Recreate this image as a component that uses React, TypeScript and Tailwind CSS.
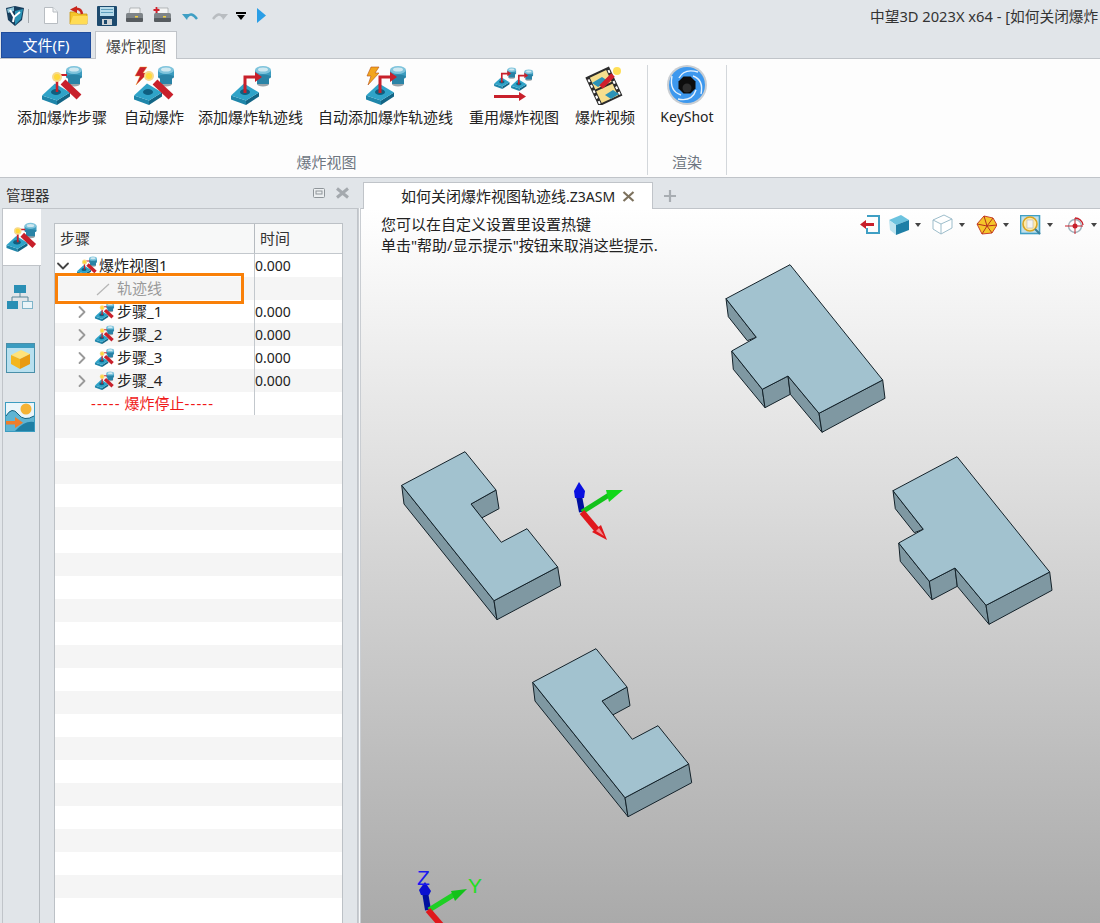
import React from "react";
import { ChevronDown, ChevronRight } from "lucide-react";

const Block = () => (
  <g>
    <polygon points="2,30.5 17,35.5 17,40 2,34.5" fill="#1f86aa" />
    <polygon points="17,35.5 30,27.5 30,31.5 17,40" fill="#136585" />
    <polygon points="2,30.5 15,18.5 30,27.5 17,35.5" fill="#2fa3c8" />
    <ellipse cx="16" cy="27" rx="5" ry="3" fill="#0f5f80" />
  </g>
);
const Cyl = () => (
  <g>
    <ellipse cx="34" cy="19" rx="6" ry="2.5" fill="#9aa3a8" />
    <rect x="28" y="11" width="12" height="8" fill="#2a83a6" />
    <rect x="26" y="5" width="16" height="7" fill="#3c9cbf" />
    <ellipse cx="34" cy="12" rx="8" ry="2.5" fill="#2a83a6" />
    <ellipse cx="34" cy="5" rx="8" ry="4" fill="#7fc4dc" />
    <ellipse cx="34" cy="4.5" rx="5" ry="2" fill="#cfe8f0" />
  </g>
);
const Bar = () => <line x1="23" y1="17" x2="39" y2="32" stroke="#c8202b" strokeWidth="7" />;
const Star = ({ x = 17, y = 12 }: { x?: number; y?: number }) => (
  <g>
    <circle cx={x} cy={y} r="5" fill="#f7d98a" />
    <circle cx={x} cy={y} r="3" fill="#ffd83a" />
  </g>
);
const Bolt = () => (
  <polygon points="8,2 15,2 11,8 16,8 4,20 8,11 3,11" fill="#c8202b" stroke="#f0a020" strokeWidth="0.4" />
);
const Arrow = () => (
  <g>
    <polyline points="16,28 16,12 27,12" fill="none" stroke="#c8202b" strokeWidth="3" />
    <polygon points="26,7 33,12 26,17" fill="#c8202b" />
  </g>
);

const StepIcon = ({ size = 44 }: { size?: number }) => (
  <svg width={size} height={(size * 40) / 44} viewBox="0 0 44 40">
    <Block />
    <Cyl />
    <line x1="17" y1="27" x2="17" y2="12" stroke="#c8202b" strokeWidth="2.5" />
    <line x1="17" y1="10" x2="27" y2="10" stroke="#c8202b" strokeWidth="2" />
    <Bar />
    <Star />
  </svg>
);
const AutoIcon = () => (
  <svg width="44" height="40" viewBox="0 0 44 40">
    <Block />
    <Cyl />
    <Bar />
    <Bolt />
    <Star y={11} />
  </svg>
);
const TrackIcon = ({ bolt }: { bolt?: boolean }) => (
  <svg width="44" height="40" viewBox="0 0 44 40">
    <Block />
    <Cyl />
    <Arrow />
    {bolt && <polygon points="7,2 15,2 11,8 15,8 4,20 7,11 3,11" fill="#f2a51e" stroke="#b5501a" strokeWidth="0.6" />}
  </svg>
);
const ReuseIcon = () => (
  <svg width="44" height="40" viewBox="0 0 44 40">
    <g transform="translate(1,2) scale(0.55)">
      <Block />
      <Cyl />
      <Arrow />
    </g>
    <g transform="translate(18,4) scale(0.55)">
      <Block />
      <Cyl />
      <Arrow />
    </g>
    <rect x="2" y="30" width="26" height="3" fill="#c8202b" />
    <polygon points="27,27 34,31.5 27,36" fill="#c8202b" />
  </svg>
);
const VideoIcon = () => (
  <svg width="44" height="40" viewBox="0 0 44 40">
    <g transform="rotate(-25 20 22)">
      <rect x="8" y="6" width="26" height="32" fill="#2b2b2b" />
      <rect x="12" y="8" width="18" height="13" fill="#f5de8e" />
      <rect x="12" y="23" width="18" height="13" fill="#f5de8e" />
      <g fill="#fff">
        <rect x="9" y="9" width="2" height="3" />
        <rect x="9" y="15" width="2" height="3" />
        <rect x="9" y="21" width="2" height="3" />
        <rect x="9" y="27" width="2" height="3" />
        <rect x="9" y="33" width="2" height="3" />
        <rect x="31" y="9" width="2" height="3" />
        <rect x="31" y="15" width="2" height="3" />
        <rect x="31" y="21" width="2" height="3" />
        <rect x="31" y="27" width="2" height="3" />
        <rect x="31" y="33" width="2" height="3" />
      </g>
    </g>
    <polygon points="9,18 19,12 25,16 15,22" fill="#2b93b8" />
    <polygon points="22,30 30,25 36,29 28,34" fill="#2b93b8" />
    <line x1="18" y1="22" x2="30" y2="10" stroke="#d0202b" strokeWidth="5" />
    <circle cx="34" cy="6" r="4" fill="#ffdf55" />
  </svg>
);
const KeyShotIcon = () => (
  <svg width="42" height="42" viewBox="0 0 42 42">
    <circle cx="21" cy="21" r="20" fill="#c9ced3" />
    <circle cx="21" cy="21" r="18" fill="#3d98ee" />
    <g stroke="#e6f2fd" strokeWidth="1.4" fill="none">
      <path d="M13 14 Q18 4 32 8" />
      <path d="M27 12 Q38 16 35 30" />
      <path d="M30 26 Q26 38 12 35" />
      <path d="M15 31 Q3 27 6 12" />
    </g>
    <polygon points="17.5,12.5 24.5,12.5 29.5,17.5 29.5,24.5 24.5,29.5 17.5,29.5 12.5,24.5 12.5,17.5" fill="#0d0d0d" />
    <circle cx="21" cy="24" r="4.5" fill="#2e2e2e" />
  </svg>
);

const RibbonBtn = ({ label, className = "", children }: { label: string; className?: string; children: React.ReactNode }) => (
  <div className={`flex flex-col items-center ${className}`}>
    <div className="h-[40px] flex items-center justify-center">{children}</div>
    <div className="h-[24px] leading-[24px] text-[15px] text-[#222] whitespace-nowrap">{label}</div>
  </div>
);

const Logo = () => (
  <svg width="20" height="22" viewBox="0 0 20 22">
    <polygon points="1,3 10,1 19,3 17,15 10,21 3,15" fill="#173d5c" />
    <polygon points="10,6 18,4 16,14 10,20" fill="#2a93b5" />
    <polygon points="2,4 9,2 9,6 3,8" fill="#8fc7da" />
    <path d="M5 5 L9 12 M9 12 L15 7 M9 12 L8 17" stroke="#fff" strokeWidth="2" fill="none" />
  </svg>
);
const NewDoc = () => (
  <svg width="14" height="17" viewBox="0 0 14 17">
    <path d="M0.5 0.5 H9 L13.5 5 V16.5 H0.5 Z" fill="#fff" stroke="#b8bdc2" />
    <path d="M9 0.5 V5 H13.5" fill="#eef1f3" stroke="#b8bdc2" />
  </svg>
);
const OpenIcon = () => (
  <svg width="20" height="19" viewBox="0 0 20 19">
    <path d="M1 6 H7 L9 8 H18 V18 H1 Z" fill="#f5c52a" stroke="#c99712" strokeWidth="0.8" />
    <polygon points="1,18 4,10 19,10 18,18" fill="#ffdc55" />
    <path d="M13 8 Q12 2 6 3" stroke="#c9261c" strokeWidth="2.5" fill="none" />
    <polygon points="8,0 1,3.5 8,7" fill="#c9261c" />
  </svg>
);
const SaveIcon = () => (
  <svg width="20" height="20" viewBox="0 0 20 20">
    <rect width="20" height="20" rx="1" fill="#1d4a6e" />
    <rect x="3" y="1" width="14" height="9" fill="#b7dbea" />
    <rect x="4" y="3" width="12" height="1" fill="#5f9fbd" />
    <rect x="4" y="6" width="12" height="1" fill="#5f9fbd" />
    <rect x="5" y="13" width="10" height="6" fill="#ced3d6" />
    <rect x="7" y="14" width="3" height="4" fill="#1d4a6e" />
  </svg>
);
const PrintIcon = ({ plus }: { plus?: boolean }) => (
  <svg width="19" height="17" viewBox="0 0 19 17">
    <polygon points="5,1 15,1 15,7 4,7" fill="#f4f5f5" stroke="#8d9296" strokeWidth="0.6" />
    <rect x="1" y="6" width="17" height="8" rx="1.5" fill="#7e8488" />
    <rect x="1" y="11" width="17" height="4" rx="1" fill="#565b5f" />
    <rect x="10" y="9" width="3" height="1.5" fill="#f0d040" />
    {plus && <path d="M3.5 0 V6 M0.5 3 H6.5" stroke="#d1202b" strokeWidth="1.8" />}
  </svg>
);
const UndoIcon = ({ color, flip }: { color: string; flip?: boolean }) => (
  <svg width="17" height="10" viewBox="0 0 17 10" className={flip ? "-scale-x-100" : ""}>
    <path d="M5 6 Q9 0 15 8" stroke={color} strokeWidth="2.4" fill="none" />
    <polygon points="0,3 7,3 5,9" fill={color} />
  </svg>
);

const Hierarchy = () => (
  <svg width="26" height="24" viewBox="0 0 26 24">
    <rect x="7" y="0" width="12" height="8" fill="#2a8fb5" />
    <path d="M13 8 V12 M5 16 V12 H21 V16" stroke="#5a8597" fill="none" />
    <rect x="0" y="16" width="11" height="8" fill="#2a8fb5" />
    <rect x="15.5" y="16.5" width="10" height="7" fill="#eaf4f8" stroke="#7fb4c9" />
  </svg>
);
const BoxWin = () => (
  <svg width="29" height="30" viewBox="0 0 29 30">
    <rect x="0.5" y="0.5" width="28" height="29" fill="#b8e0ef" stroke="#4a8fa9" />
    <rect x="1" y="1" width="27" height="4" fill="#3b9cc0" />
    <polygon points="5,12 15,7 24,11 14,16" fill="#ffe27a" />
    <polygon points="5,12 14,16 14,26 5,21" fill="#f3b61f" />
    <polygon points="14,16 24,11 24,21 14,26" fill="#e89a12" />
  </svg>
);
const Landscape = () => (
  <svg width="30" height="30" viewBox="0 0 30 30">
    <rect x="0.5" y="0.5" width="29" height="29" fill="#eaf5fa" stroke="#3b9cc0" />
    <circle cx="21" cy="7" r="5.5" fill="#f5b335" />
    <path d="M1 14 Q7 4 13 12 T29 14 V29 H1 Z" fill="#5fb4d2" />
    <path d="M10 29 Q20 18 29 20 V29 Z" fill="#1f7fa4" />
    <path d="M1 14 Q7 4 13 12 T29 14" stroke="#14607e" fill="none" />
    <rect x="1" y="19" width="10" height="3.5" fill="#ee7d2b" />
    <polygon points="10,15 18,20.8 10,26" fill="#ee7d2b" />
  </svg>
);

const Caret = () => (
  <svg width="6" height="4" viewBox="0 0 6 4" className="ml-[6px]">
    <polygon points="0,0 6,0 3,4" fill="#444" />
  </svg>
);
const ViewIcons = () => (
  <div className="absolute top-[5px] right-[3px] flex items-center">
    <svg width="20" height="19" viewBox="0 0 20 19" className="mr-[8px]">
      <path d="M7 1 H19 V18 H7 V13" fill="none" stroke="#3f9fc4" strokeWidth="2" />
      <rect x="5" y="8" width="9" height="3" fill="#c8202b" />
      <polygon points="6,5 0,9.5 6,14" fill="#c8202b" />
    </svg>
    <svg width="21" height="21" viewBox="0 0 21 21">
      <polygon points="1,6 13,1 21,6 8,11" fill="#6cc3df" />
      <polygon points="1,6 8,11 8,21 2,16" fill="#bfe4f0" />
      <polygon points="8,11 21,6 21,16 8,21" fill="#1e7fa6" />
    </svg>
    <Caret />
    <svg width="21" height="21" viewBox="0 0 21 21" className="ml-[11px]">
      <path d="M1 6 L12 1 L20 5 V14 L9 20 L1 15 Z M1 6 L9 10 L20 5 M9 10 V20" fill="#fff" stroke="#9dbdcb" />
    </svg>
    <Caret />
    <svg width="21" height="20" viewBox="0 0 21 20" className="ml-[11px]">
      <polygon points="1,9 8,1 17,3 21,10 16,18 6,19" fill="#f5c52a" stroke="#c8402b" />
      <path d="M1 9 L11 11 L8 1 M11 11 L17 3 M11 11 L21 10 M11 11 L16 18 M11 11 L6 19" stroke="#b5301f" fill="none" />
    </svg>
    <Caret />
    <svg width="21" height="20" viewBox="0 0 21 20" className="ml-[11px]">
      <rect x="0.5" y="0.5" width="19" height="18" fill="#bfe0ec" stroke="#3f9fc4" strokeWidth="1.6" />
      <circle cx="10" cy="9" r="7" fill="#ffe9a8" stroke="#d9a520" strokeWidth="1.6" />
      <rect x="7" y="5" width="6" height="8" fill="#f4f4f4" stroke="#aaa" strokeWidth="0.5" />
      <line x1="15" y1="14" x2="20" y2="19" stroke="#3a7f9a" strokeWidth="2" />
    </svg>
    <Caret />
    <svg width="20" height="20" viewBox="0 0 20 20" className="ml-[12px]">
      <circle cx="10" cy="11" r="6.5" fill="none" stroke="#9fb3bd" strokeWidth="1.4" />
      <path d="M10 3 A8 8 0 0 1 18 10" fill="none" stroke="#c8202b" strokeWidth="1.4" />
      <path d="M10 3 V19 M0 11 H18" stroke="#c8202b" strokeWidth="1" />
      <circle cx="10" cy="11" r="2.5" fill="#c8202b" />
    </svg>
    <Caret />
  </div>
);

const top1 = "790,264.7 882.7,380 819,413.3 788,376 762.3,389.3 731.7,351 756.3,337.3 726,298.7";
const sides1 = [
  "726,298.7 756.3,337.3 747.3,340.7 728.3,316.7",
  "731.7,351 762.3,389.3 765,407.7 733.3,369.3",
  "762.3,389.3 788,376 790.3,394.3 765,407.7",
  "788,376 819,413.3 822,432.3 790.3,394.3",
  "819,413.3 882.7,380 885,398.3 822,432.3",
];
const top2 = "465,451.7 496,490 471,504 501.3,542.3 527,528.7 557.7,567 494,600.7 401.7,485.3";
const sides2 = [
  "401.7,485.3 494,600.7 497,619.7 404,504",
  "494,600.7 557.7,567 560.7,585.7 497,619.7",
  "471,504 496,490 499,508.7 481.7,518",
];
const Part = ({ top, sides, dx, dy }: { top: string; sides: string[]; dx: number; dy: number }) => (
  <g transform={`translate(${dx} ${dy})`} stroke="#14222a" strokeWidth="1" strokeLinejoin="round">
    {sides.map((s) => (
      <polygon key={s} points={s} fill="#7f98a2" />
    ))}
    <polygon points={top} fill="#a2c2cf" />
  </g>
);

const Scene = () => (
  <svg className="absolute inset-0" width="739" height="714" viewBox="361 209 739 714">
    <Part top={top1} sides={sides1} dx={0} dy={0} />
    <Part top={top1} sides={sides1} dx={167} dy={192} />
    <Part top={top2} sides={sides2} dx={0} dy={0} />
    <Part top={top2} sides={sides2} dx={131} dy={197} />
    <g>
      <line x1="582" y1="512" x2="579" y2="496" stroke="#000f9e" strokeWidth="6" />
      <polygon points="579,482 585,491 584,498 575,498 574,491" fill="#0a10e0" />
      <line x1="582" y1="512" x2="609" y2="495" stroke="#12c21a" strokeWidth="5" />
      <polygon points="623,490 609,502 606,490" fill="#12d81a" />
      <line x1="582" y1="512" x2="598" y2="531" stroke="#e0181c" strokeWidth="6" />
      <polygon points="607,540 592,532 601,525" fill="#e0181c" />
      <polygon points="604,536 596,531 599,528" fill="#f58a8e" />
    </g>
    <g>
      <line x1="428" y1="910" x2="425" y2="892" stroke="#000f9e" strokeWidth="6" />
      <polygon points="425,882 431,891 429,895 421,895 419,890" fill="#0a10d0" />
      <line x1="429" y1="910" x2="455" y2="894" stroke="#1ed024" strokeWidth="5" />
      <polygon points="467,889 455,901 451,891" fill="#12c21a" />
      <line x1="428" y1="910" x2="441" y2="925" stroke="#e0181c" strokeWidth="6" />
      <text x="417" y="885" fontFamily="'Liberation Sans', sans-serif" fontSize="21" fill="#1a1aee">Z</text>
      <text x="468" y="893" fontFamily="'Liberation Sans', sans-serif" fontSize="21" fill="#22dd22">Y</text>
    </g>
  </svg>
);

const rows = Array.from({ length: 29 }, (_, i) => i);

const Row = ({ i }: { i: number }) => {
  const gray = i % 2 === 1;
  const names: Record<number, string> = { 2: "步骤_1", 3: "步骤_2", 4: "步骤_3", 5: "步骤_4" };
  return (
    <div className={`h-[23px] shrink-0 flex items-center text-[15px] leading-[23px] ${gray ? "bg-[#f5f5f5]" : "bg-white"}`}>
      <div className={`w-[200px] h-full flex items-center ${i < 7 ? "border-r border-[#c3c8cd]" : ""}`}>
        {i === 0 && (
          <>
            <ChevronDown size={20} strokeWidth={2.2} className="ml-[-2px] text-[#444]" />
            <span className="ml-[3px]"><StepIcon size={22} /></span>
            <span className="ml-px text-[#222] whitespace-nowrap">爆炸视图1</span>
          </>
        )}
        {i === 1 && (
          <>
            <svg width="14" height="14" viewBox="0 0 14 14" className="ml-[41px]">
              <line x1="1" y1="13" x2="13" y2="2" stroke="#b5b5b5" strokeWidth="1.2" />
            </svg>
            <span className="ml-[7px] text-[#999]">轨迹线</span>
          </>
        )}
        {names[i] && (
          <>
            <ChevronRight size={20} strokeWidth={2.2} className="ml-[17px] text-[#999]" />
            <span className="ml-[2px]"><StepIcon size={21} /></span>
            <span className="ml-[2px] text-[#222] whitespace-nowrap">{names[i]}</span>
          </>
        )}
        {i === 6 && (
          <span className="ml-[36px] text-[#f01818] whitespace-nowrap">
            <span className="tracking-[1.1px]">-----</span> 爆炸停止<span className="tracking-[1.1px]">-----</span>
          </span>
        )}
      </div>
      {i !== 1 && i < 6 && <span className="text-[14px] text-[#222]">0.000</span>}
    </div>
  );
};

export default function App() {
  return (
    <div className="relative w-[1100px] h-[923px] overflow-hidden flex flex-col bg-[#e1e5e9] font-['Noto_Sans','Noto_Sans_CJK_SC',sans-serif]">
      <div className="h-[31px] shrink-0 flex items-center">
        <span className="ml-[5px]"><Logo /></span>
        <span className="ml-[3px] w-px h-[14px] bg-[#a4a9ae]" />
        <span className="ml-[15px]"><NewDoc /></span>
        <span className="ml-[11px]"><OpenIcon /></span>
        <span className="ml-[8px]"><SaveIcon /></span>
        <span className="ml-[8px]"><PrintIcon /></span>
        <span className="ml-[9px]"><PrintIcon plus /></span>
        <span className="ml-[10px]"><UndoIcon color="#3f9fc4" /></span>
        <span className="ml-[12px]"><UndoIcon color="#b9bdc1" flip /></span>
        <span className="ml-[8px] flex flex-col items-center gap-px">
          <span className="block w-[10px] h-[2px] bg-black" />
          <svg width="8" height="5" viewBox="0 0 8 5"><polygon points="0,0 8,0 4,5" fill="#000" /></svg>
        </span>
        <svg width="9" height="15" viewBox="0 0 9 15" className="ml-[11px]"><polygon points="0,0 9,7.5 0,15" fill="#2a9ee6" /></svg>
        <span className="ml-[604px] text-[14.7px] leading-[20px] text-[#333] whitespace-nowrap">中望3D 2023X x64 - [如何关闭爆炸</span>
      </div>

      <div className="h-[27px] shrink-0 flex items-end relative z-10">
        <div className="ml-px w-[90px] h-[26px] bg-[#2b5fb5] border border-[#1f4c9c] flex items-center justify-center text-white text-[15px] leading-[24px]">文件(F)</div>
        <div className="ml-[4px] w-[82px] h-[28px] -mb-px bg-[#fdfdfd] border border-b-0 border-[#c0c4c9] flex items-center justify-center text-[#444] text-[15px] leading-[24px]">爆炸视图</div>
      </div>

      <div className="h-[120px] shrink-0 bg-[#fdfdfd] border-y border-[#c0c4c9] flex">
        <div className="w-[648px] flex flex-col border-r border-[#d3d7db] mt-[6px] mb-[2px]">
          <div className="flex pl-[17px]">
            <RibbonBtn label="添加爆炸步骤"><StepIcon /></RibbonBtn>
            <RibbonBtn className="ml-[17px]" label="自动爆炸"><AutoIcon /></RibbonBtn>
            <RibbonBtn className="ml-[14px]" label="添加爆炸轨迹线"><TrackIcon /></RibbonBtn>
            <RibbonBtn className="ml-[15px]" label="自动添加爆炸轨迹线"><TrackIcon bolt /></RibbonBtn>
            <RibbonBtn className="ml-[16px]" label="重用爆炸视图"><ReuseIcon /></RibbonBtn>
            <RibbonBtn className="ml-[16px]" label="爆炸视频"><VideoIcon /></RibbonBtn>
          </div>
          <div className="mt-auto mb-[3px] pl-[6px] text-center text-[15px] leading-[20px] text-[#6e7681]">爆炸视图</div>
        </div>
        <div className="w-[79px] flex flex-col border-r border-[#d3d7db] mt-[6px] mb-[2px]">
          <div className="flex flex-col items-center">
            <div className="h-[40px] flex items-center justify-center"><KeyShotIcon /></div>
            <div className="h-[24px] leading-[24px] text-[14px] text-[#222]">KeyShot</div>
          </div>
          <div className="mt-auto mb-[3px] text-center text-[15px] leading-[20px] text-[#6e7681]">渲染</div>
        </div>
      </div>

      <div className="flex-1 min-h-0 flex">
        <div className="w-[358px] shrink-0 flex flex-col">
          <div className="h-[30px] shrink-0 flex items-center">
            <span className="ml-[6px] mt-[3px] text-[14.5px] leading-[20px] text-[#333]">管理器</span>
            <svg width="12" height="10" viewBox="0 0 12 10" className="ml-[263px]">
              <rect x="0.5" y="0.5" width="11" height="9" rx="1" fill="#eceff1" stroke="#8f959a" />
              <rect x="3" y="3" width="6" height="3" fill="none" stroke="#8f959a" />
            </svg>
            <svg width="15" height="12" viewBox="0 0 15 12" className="ml-[10px]">
              <path d="M2 1.5 L13 10.5 M13 1.5 L2 10.5" stroke="#a4a9ae" strokeWidth="3" />
            </svg>
          </div>
          <div className="flex-1 min-h-0 flex ml-[2px] border-t border-l border-r border-[#c0c4c9]">
            <div className="w-[38px] shrink-0 flex flex-col relative">
              <div className="absolute top-[57px] bottom-0 right-px w-px bg-[#b6bbc0]" />
              <div className="h-[57px] shrink-0 bg-white border-b border-[#c0c4c9] pt-[13px] pl-[2px]"><StepIcon size={33} /></div>
              <div className="mt-[19px] pl-[4px] h-[24px]"><Hierarchy /></div>
              <div className="mt-[34px] pl-[3px] h-[30px]"><BoxWin /></div>
              <div className="mt-[29px] pl-[2px] h-[30px]"><Landscape /></div>
            </div>
            <div className="flex-1 min-w-0 pl-[13px] pt-[14px]">
              <div className="relative w-[289px] h-[720px] flex flex-col border-x border-t border-[#bcc1c6] bg-white">
                <div className="h-[30px] shrink-0 flex bg-[#f7f8f8] border-b border-[#c3c8cd] text-[15px] leading-[29px] text-[#333]">
                  <div className="w-[200px] pl-[5px] border-r border-[#b6bbc0]">步骤</div>
                  <div className="pl-[5px]">时间</div>
                </div>
                {rows.map((i) => (
                  <Row key={i} i={i} />
                ))}
                <div className="absolute left-0 top-[49px] w-[189px] h-[31px] border-[3px] border-[#f98008]" />
              </div>
            </div>
          </div>
        </div>
        <div className="w-[3px] shrink-0 mt-[30px] bg-[#f6f7f8] border-x border-[#c9cdd2]" />
        <div className="flex-1 min-w-0 flex flex-col">
          <div className="h-[31px] shrink-0 flex items-end border-b border-[#c0c4c9]">
            <div className="ml-[2px] w-[290px] h-[27px] -mb-px bg-white border border-b-0 border-[#c0c4c9] flex items-center text-[15px] leading-[24px] text-[#222] whitespace-nowrap">
              <span className="ml-[37px]">如何关闭爆炸视图轨迹线<span className="text-[14px]">.Z3ASM</span></span>
              <svg width="13" height="11" viewBox="0 0 13 11" className="ml-[7px]">
                <path d="M1.5 1 L11.5 10 M11.5 1 L1.5 10" stroke="#7d725e" strokeWidth="2.2" />
              </svg>
            </div>
            <svg width="14" height="14" viewBox="0 0 14 14" className="ml-[10px] mb-[5px]">
              <path d="M7 1 V13 M1 7 H13" stroke="#a8adb2" strokeWidth="2.2" />
            </svg>
          </div>
          <div className="relative flex-1 min-h-0 bg-gradient-to-b from-white to-[#aaaaaa] pl-[20px] pt-[5px] text-[15px] leading-[21px] text-[#222]">
            <Scene />
            <div className="relative">您可以在自定义设置里设置热键</div>
            <div className="relative">单击"帮助/显示提示"按钮来取消这些提示.</div>
            <ViewIcons />
          </div>
        </div>
      </div>
    </div>
  );
}
